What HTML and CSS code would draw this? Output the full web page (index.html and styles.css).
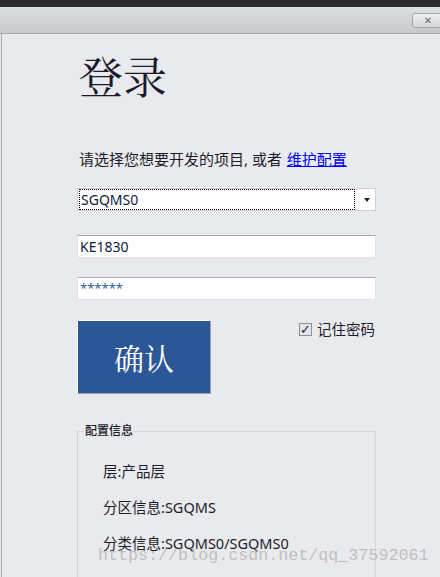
FILE: index.html
```html
<!DOCTYPE html>
<html lang="zh">
<head>
  <meta charset="UTF-8">
  <title>登录</title>
  <link rel="stylesheet" href="styles.css">
</head>
<body>
  <div class="topbar"></div>
  <div class="titlebar">
    <span class="close">&#x2715;</span>
  </div>
  <div class="frame">
    <div class="content">
      <h1 class="title">登录</h1>
      <p class="hint">请选择您想要开发的项目, 或者 <a href="#">维护配置</a></p>

      <div class="select">
        <span class="select-value">SGQMS0</span>
        <span class="select-arrow"></span>
      </div>
      <div class="field">KE1830</div>
      <div class="field pwd">******</div>

      <div class="actions">
        <button class="ok">确认</button>
        <label class="remember"><span class="check">&#x2713;</span>记住密码</label>
      </div>

      <fieldset class="info">
        <legend>配置信息</legend>
        <div class="info-row">层:产品层</div>
        <div class="info-row">分区信息:SGQMS</div>
        <div class="info-row">分类信息:SGQMS0/SGQMS0</div>
      </fieldset>
    </div>
  </div>
  <div class="watermark">https://blog.csdn.net/qq_37592061</div>
</body>
</html>
```

FILE: styles.css
```css
html, body {
  margin: 0;
  padding: 0;
  width: 100%;
  height: 100%;
  overflow: hidden;
  background: #e9eaee;
  font-family: "Noto Sans", "Noto Sans CJK SC", sans-serif;
  color: #1c1c2a;
}

.topbar {
  height: 7px;
  background: #2c2c2e;
}

.titlebar {
  height: 26px;
  background: linear-gradient(#dedfe3, #c8c9ce);
  border-bottom: 1px solid #a4a6ac;
  display: flex;
  justify-content: flex-end;
  align-items: flex-start;
}

.close {
  margin-top: 6px;
  margin-right: -4px;
  width: 30px;
  height: 13px;
  border: 1px solid #a3a4aa;
  border-radius: 3px;
  background: linear-gradient(#eeeff2, #d6d7db);
  color: #66666f;
  font-family: "DejaVu Sans", sans-serif;
  font-weight: bold;
  font-size: 10px;
  line-height: 13px;
  text-align: center;
}

.frame {
  margin-left: 1px;
  border-left: 1px solid #a6a8ae;
  min-height: 560px;
}

.content {
  padding-left: 75px;
  width: 299px;
}

.title {
  margin: 0 0 0 2px;
  padding-top: 14px;
  font-family: "Noto Serif CJK SC", "Noto Sans CJK SC", serif;
  font-weight: normal;
  font-size: 44px;
  line-height: 54px;
  color: #1a1a2c;
}

.hint {
  margin: 47px 0 0 2px;
  font-size: 15px;
  line-height: 20px;
}

.hint a {
  color: #0000ff;
  margin-left: 1px;
}

.select {
  margin-top: 19px;
  height: 21px;
  border: 1px solid #cfd1d6;
  background: #fff;
  display: flex;
  align-items: center;
}

.select-value {
  flex: 1;
  height: 19px;
  margin-left: 1px;
  border: 1px dotted #000;
  font-size: 14px;
  line-height: 19px;
  padding-left: 1px;
  color: #0e1a40;
}

.select-arrow {
  width: 0;
  height: 0;
  margin: 0 5px 0 9px;
  border-left: 3px solid transparent;
  border-right: 3px solid transparent;
  border-top: 4px solid #222;
}

.field {
  margin-top: 24px;
  height: 21px;
  border: 1px solid #e1e3e8;
  border-top-color: #a9abb2;
  background: #fff;
  font-size: 14px;
  line-height: 21px;
  padding-left: 2px;
  color: #0e1a40;
}

.field + .field {
  margin-top: 19px;
}

.pwd {
  color: #2f5f9e;
  font-size: 13px;
}

.actions {
  margin-top: 20px;
  display: flex;
  align-items: flex-start;
  justify-content: space-between;
}

.ok {
  width: 134px;
  height: 74px;
  margin: 0;
  padding: 0;
  border: 1px solid #fff;
  border-right-color: #a0a0a6;
  border-bottom-color: #a0a0a6;
  background: #2b5797;
  color: #fff;
  font-family: "Noto Serif CJK SC", "Noto Sans CJK SC", serif;
  font-size: 30px;
}

.remember {
  margin-top: 0;
  margin-right: 1px;
  display: flex;
  align-items: center;
  font-size: 14.5px;
  line-height: 18px;
}

.check {
  width: 11px;
  height: 11px;
  border: 1px solid #8f9097;
  background: #e4e5ea;
  margin-right: 5px;
  font-family: "DejaVu Sans", sans-serif;
  font-size: 13px;
  line-height: 11px;
  font-weight: bold;
  color: #1e1e2a;
  text-align: center;
}

.info {
  margin: 30px 0 0 0;
  padding: 23px 0 60px 0;
  border: 1px solid #d6d7db;
}

.info legend {
  padding: 0 1px;
  margin-left: 6px;
  font-size: 12px;
  line-height: 14px;
  font-weight: 500;
}

.info-row {
  padding-left: 25px;
  font-size: 14.5px;
  line-height: 20px;
  margin-bottom: 16px;
}

.watermark {
  position: absolute;
  left: 98px;
  top: 545px;
  font-family: "Liberation Mono", monospace;
  font-size: 16.7px;
  line-height: 22px;
  color: rgba(160, 160, 160, 0.6);
  pointer-events: none;
}
```
